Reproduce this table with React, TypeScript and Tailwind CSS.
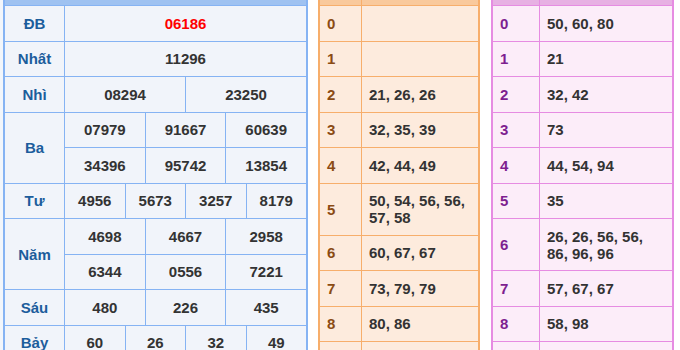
import React from 'react';

type Theme = {
  border: string;
  header: string;
  bg: string;
  label: string;
  labelW: string;
  width: string;
};

const prizes: { label: string; lines: string[][]; red?: boolean }[] = [
  { label: 'ĐB', lines: [['06186']], red: true },
  { label: 'Nhất', lines: [['11296']] },
  { label: 'Nhì', lines: [['08294', '23250']] },
  { label: 'Ba', lines: [['07979', '91667', '60639'], ['34396', '95742', '13854']] },
  { label: 'Tư', lines: [['4956', '5673', '3257', '8179']] },
  { label: 'Năm', lines: [['4698', '4667', '2958'], ['6344', '0556', '7221']] },
  { label: 'Sáu', lines: [['480', '226', '435']] },
  { label: 'Bảy', lines: [['60', '26', '32', '49']] },
];

// last row (9) sits below the fold, only its top border shows
const heads = [
  { d: '0', v: '' },
  { d: '1', v: '' },
  { d: '2', v: '21, 26, 26' },
  { d: '3', v: '32, 35, 39' },
  { d: '4', v: '42, 44, 49' },
  { d: '5', v: '50, 54, 56, 56, 57, 58', tall: true },
  { d: '6', v: '60, 67, 67' },
  { d: '7', v: '73, 79, 79' },
  { d: '8', v: '80, 86' },
  { d: '', v: '' },
];

const tails = [
  { d: '0', v: '50, 60, 80' },
  { d: '1', v: '21' },
  { d: '2', v: '32, 42' },
  { d: '3', v: '73' },
  { d: '4', v: '44, 54, 94' },
  { d: '5', v: '35' },
  { d: '6', v: '26, 26, 56, 56, 86, 96, 96', tall: true },
  { d: '7', v: '57, 67, 67' },
  { d: '8', v: '58, 98' },
  { d: '', v: '' },
];

function PrizeRow({ label, lines, red }: { label: string; lines: string[][]; red?: boolean }) {
  return (
    <div className={`flex border-b border-[#86b3f3] ${lines.length > 1 ? 'h-[71px]' : 'h-[35.5px]'}`}>
      <div className="flex w-[60px] shrink-0 items-center justify-center border-r border-[#86b3f3] text-[#1c5d9c]">
        {label}
      </div>
      <div className="flex flex-1 flex-col">
        {lines.map((cells, i) => (
          <div key={i} className={`flex flex-1 ${i < lines.length - 1 ? 'border-b border-[#86b3f3]' : ''}`}>
            {cells.map((c, j) => (
              <div
                key={j}
                className={`flex flex-1 items-center justify-center ${
                  j < cells.length - 1 ? 'border-r border-[#86b3f3]' : ''
                } ${red ? 'text-[#ff0000]' : ''}`}
              >
                {c}
              </div>
            ))}
          </div>
        ))}
      </div>
    </div>
  );
}

function LotoTable({ rows, t }: { rows: { d: string; v: string; tall?: boolean }[]; t: Theme }) {
  return (
    <div className={`shrink-0 border-x-2 ${t.width} ${t.border} ${t.bg}`}>
      <div className={`flex h-[6px] border-b ${t.border} ${t.header}`}>
        <div className={`shrink-0 border-r ${t.labelW} ${t.border}`} />
      </div>
      {rows.map((r, i) => (
        <div key={i} className={`flex border-b ${t.border} ${r.tall ? 'h-[52px]' : 'h-[35.5px]'}`}>
          <div className={`flex shrink-0 items-center border-r pl-[7px] ${t.labelW} ${t.border} ${t.label}`}>{r.d}</div>
          <div className="flex flex-1 items-center pl-[7px] pr-2">{r.v}</div>
        </div>
      ))}
    </div>
  );
}

export default function App() {
  return (
    <div className="flex h-[350px] w-[680px] overflow-hidden bg-white font-['Liberation_Sans',Arial,sans-serif] text-[15px] font-bold leading-[17px] text-[#333]">
      <div className="w-[3px] shrink-0 bg-[#f3f6fb]" />

      <div className="w-[305px] shrink-0 border-x-2 border-[#86b3f3] bg-[#f1f4fa]">
        <div className="h-[6px] border-b border-[#86b3f3] bg-[#9fc2f1]" />
        {prizes.map((p) => (
          <PrizeRow key={p.label} label={p.label} lines={p.lines} red={p.red} />
        ))}
      </div>

      <div className="ml-[10px]">
        <LotoTable
          rows={heads}
          t={{
            width: 'w-[162px]',
            labelW: 'w-[42px]',
            border: 'border-[#f7ae6b]',
            header: 'bg-[#f9c99c]',
            bg: 'bg-[#fdebdd]',
            label: 'text-[#8b4b14]',
          }}
        />
      </div>

      <div className="ml-[11px]">
        <LotoTable
          rows={tails}
          t={{
            width: 'w-[183px]',
            labelW: 'w-[47px]',
            border: 'border-[#e68ce2]',
            header: 'bg-[#e7b1e3]',
            bg: 'bg-[#fcedf9]',
            label: 'text-[#7e1f90]',
          }}
        />
      </div>
    </div>
  );
}
